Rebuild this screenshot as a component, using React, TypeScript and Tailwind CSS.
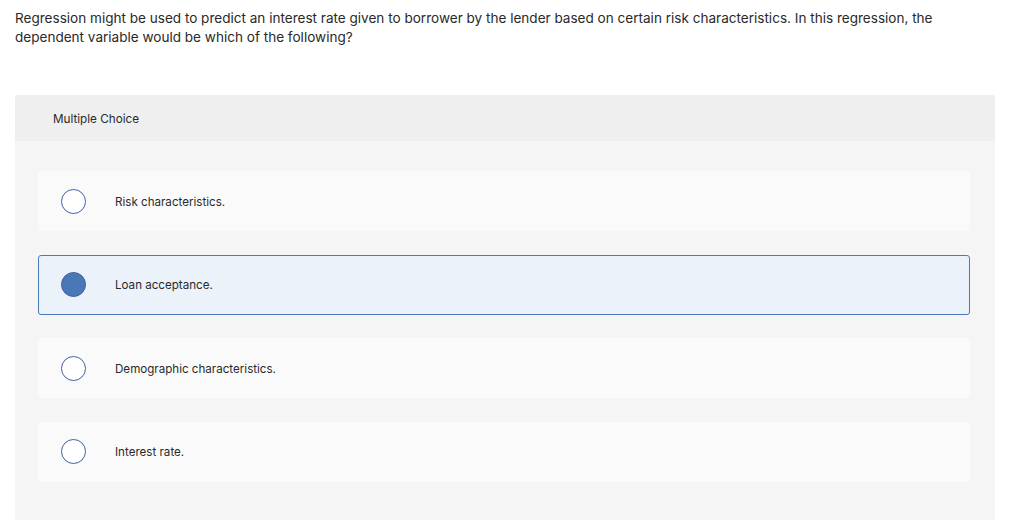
import React from "react";

const options = [
  { label: "Risk characteristics.", selected: false },
  { label: "Loan acceptance.", selected: true },
  { label: "Demographic characteristics.", selected: false },
  { label: "Interest rate.", selected: false },
];

export default function App() {
  return (
    <div
      className="w-[1024px] h-[520px] overflow-hidden bg-white text-[#2a2a2a]"
      style={{ fontFamily: "Inter, 'Open Sans', sans-serif" }}
    >
      <div className="pl-[15px] pt-[9px] text-[13.55px] leading-[19px] w-[975px]">
        Regression might be used to predict an interest rate given to borrower by the lender based on certain risk
        characteristics. In this regression, the dependent variable would be which of the following?
      </div>
      <div className="mx-[15px] mt-[48px] w-[980px] rounded-t-[3px] bg-[#f5f5f5] h-[500px]">
        <div className="h-[46px] bg-[#efefef] rounded-t-[3px] flex items-center pl-[38px] pt-[4px] text-[11.7px]">
          Multiple Choice
        </div>
        <div className="pt-[30px] pl-[23px] pr-[25px] flex flex-col gap-[23.5px]">
          {options.map((o) => (
            <div
              key={o.label}
              className={
                "h-[60px] rounded-[3px] flex items-center text-[11.6px] " +
                (o.selected
                  ? "bg-[#ebf2fa] border border-[#4a7ab9] pl-[22px]"
                  : "bg-[#fafafa] pl-[23px]")
              }
            >
              <span
                className={
                  "w-[25px] h-[25px] rounded-full border shrink-0 " +
                  (o.selected ? "bg-[#4a77b6] border-[#3d64a0]" : "bg-white border-[#3d64a0]")
                }
              />
              <span className="ml-[29px] pt-[3px]">{o.label}</span>
            </div>
          ))}
        </div>
      </div>
    </div>
  );
}
